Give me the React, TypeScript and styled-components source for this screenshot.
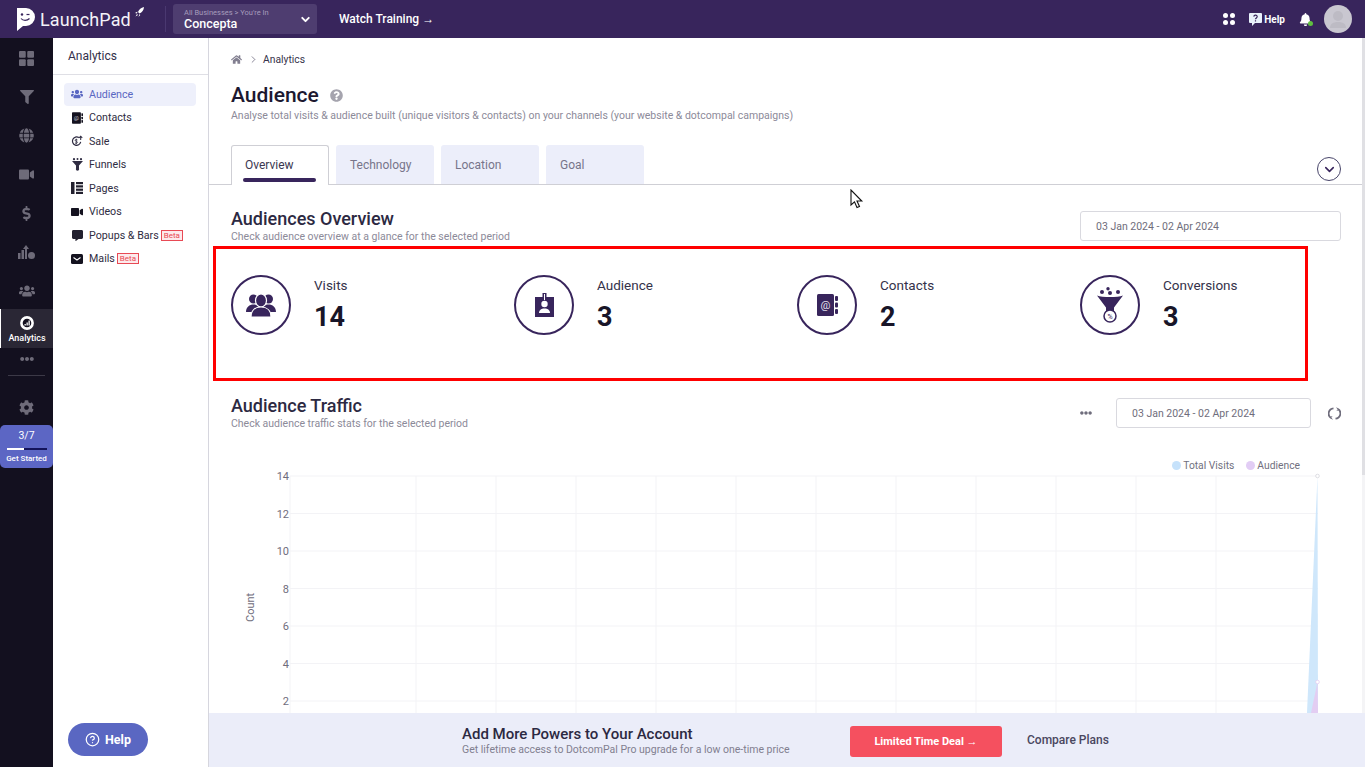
import React from 'react';
import styled, { createGlobalStyle } from 'styled-components';
import {
  FaBell,
  FaCog,
  FaCommentAlt,
  FaDollarSign,
  FaEllipsisH,
  FaFilter,
  FaGlobe,
  FaHome,
  FaQuestionCircle,
  FaUsers,
  FaVideo,
} from 'react-icons/fa';
import { FiChevronDown, FiChevronRight, FiHelpCircle } from 'react-icons/fi';

const GlobalStyle = createGlobalStyle`
  html, body {
    margin: 0;
    padding: 0;
    background: #fff;
    font-family: Roboto, "Liberation Sans", sans-serif;
    color: #2a2540;
  }
  * { box-sizing: border-box; }
`;

const Page = styled.div`
  position: relative;
  width: 1365px;
  height: 767px;
  overflow: hidden;
  display: flex;
  flex-direction: column;
`;

const TopBar = styled.header`
  height: 38px;
  flex: none;
  display: flex;
  align-items: center;
  background: #38255c;
  color: #fff;
  padding: 0 13px 0 17px;
`;

const Logo = styled.div`
  width: 148px;
  display: flex;
  align-items: center;
  gap: 4px;
  font-size: 18px;
  letter-spacing: 0.1px;
  color: #f4f2f8;
`;

const RocketSvg = styled.svg`
  margin-top: -14px;
`;

const Divider = styled.div`
  width: 1px;
  height: 26px;
  background: #4a3870;
`;

const Switcher = styled.div`
  width: 144px;
  height: 30px;
  margin-left: 7px;
  padding: 0 5px 0 11px;
  display: flex;
  justify-content: space-between;
  align-items: center;
  background: #4e3d70;
  border-radius: 3px;
`;

const SwitcherSmall = styled.div`
  font-size: 7.5px;
  line-height: 9px;
  color: #a69cbc;
  white-space: nowrap;
`;

const SwitcherName = styled.div`
  font-size: 12.5px;
  line-height: 13px;
  font-weight: 500;
`;

const Watch = styled.div`
  margin-left: 22px;
  font-size: 12px;
  font-weight: 500;
`;

const TopRight = styled.div`
  margin-left: auto;
  display: flex;
  align-items: center;
`;

const AppsButton = styled.div`
  display: flex;
  margin-right: 14px;
`;

const HelpLabel = styled.span`
  font-size: 10px;
  font-weight: 700;
  margin: 0 14px 0 2px;
`;

const BellWrap = styled.div`
  position: relative;
  display: flex;
  margin-right: 12px;
`;

const BellDot = styled.span`
  position: absolute;
  right: -1px;
  bottom: 0;
  width: 5px;
  height: 5px;
  border-radius: 50%;
  background: #5fbf3f;
`;

const Avatar = styled.div`
  width: 28px;
  height: 28px;
  border-radius: 50%;
  background: #c9c7d0;
  display: flex;
  align-items: center;
  justify-content: center;
`;

const Body = styled.div`
  flex: 1;
  min-height: 0;
  display: flex;
`;

const Rail = styled.nav`
  width: 53px;
  flex: none;
  background: #13101f;
  display: flex;
  flex-direction: column;
  align-items: stretch;
  color: #6e6b79;
`;

const RailIcon = styled.div<{ $h: number }>`
  height: ${(p) => p.$h}px;
  display: flex;
  align-items: center;
  justify-content: center;
`;

const RailGear = styled(RailIcon)`
  padding-top: 13px;
`;

const RailActive = styled.div`
  height: 39px;
  background: #2a2735;
  border-left: 1px solid #fff;
  display: flex;
  flex-direction: column;
  align-items: center;
  justify-content: center;
  gap: 3px;
  padding-top: 1px;
  color: #fff;
  font-size: 9px;
  font-weight: 500;
`;

const RailRule = styled.div`
  height: 1px;
  margin: 5px 8px 0;
  background: #3c3947;
`;

const StartCard = styled.div`
  height: 43px;
  background: #5c66c4;
  border-radius: 5px;
  color: #fff;
  display: flex;
  flex-direction: column;
  align-items: center;
  padding-top: 4px;
`;

const StartCount = styled.div`
  font-size: 10.5px;
  line-height: 13px;
`;

const StartTrack = styled.div`
  width: 40px;
  height: 2px;
  margin-top: 6px;
  background: #14145a;
`;

const StartFill = styled.div`
  height: 100%;
  background: #fff;
`;

const StartLabel = styled.div`
  font-size: 8px;
  line-height: 11px;
  margin-top: 3px;
  font-weight: 500;
  white-space: nowrap;
`;

const SubNav = styled.aside`
  width: 156px;
  flex: none;
  display: flex;
  flex-direction: column;
  border-right: 1px solid #d6d6de;
`;

const SubNavTitle = styled.div`
  height: 37px;
  padding: 10px 0 0 15px;
  font-size: 12px;
  line-height: 16px;
  color: #33304a;
  border-bottom: 1px solid #dfdfe5;
`;

const SubNavList = styled.div`
  padding: 7.5px 12px 0 11px;
  flex: 1;
  display: flex;
  flex-direction: column;
`;

const SubItem = styled.div<{ $active?: boolean }>`
  height: 23.5px;
  display: flex;
  align-items: center;
  padding-left: 7px;
  gap: 6px;
  border-radius: 4px;
  font-size: 10.7px;
  color: ${(p) => (p.$active ? '#5a67c2' : '#2f2c42')};
  background: ${(p) => (p.$active ? '#eef0fb' : 'transparent')};
`;

const SubIcon = styled.span`
  width: 12px;
  height: 14px;
  flex: none;
  display: flex;
  align-items: center;
  justify-content: center;
`;

const Beta = styled.span`
  font-size: 8px;
  line-height: 9px;
  padding: 0 2px;
  margin-left: -4px;
  color: #e84a55;
  background: #fdeaec;
  border: 1px solid #e84a55;
`;

const HelpButton = styled.div`
  width: 80px;
  height: 33px;
  margin: 0 0 11px 15px;
  display: flex;
  align-items: center;
  justify-content: center;
  gap: 5px;
  border-radius: 17px;
  background: #5a67c2;
  color: #fff;
  font-size: 12.5px;
  font-weight: 700;
`;

const Main = styled.main`
  flex: 1;
  min-width: 0;
  display: flex;
  flex-direction: column;
`;

const ScrollArea = styled.div`
  flex: 1;
  min-height: 0;
  display: flex;
  overflow: hidden;
`;

const Content = styled.div`
  flex: 1;
  min-width: 0;
`;

const ScrollTrack = styled.div`
  width: 3px;
  flex: none;
  background: #f4f4f6;
`;

const ScrollThumb = styled.div`
  height: 437px;
  background: #e0e0e4;
`;

const Header = styled.div`
  padding: 14px 0 0 22px;
`;

const Crumbs = styled.div`
  height: 14px;
  display: flex;
  align-items: center;
  gap: 6px;
  color: #827f90;
  font-size: 10.3px;
`;

const CrumbText = styled.span`
  color: #35324a;
  margin-left: -2px;
`;

const TitleRow = styled.div`
  margin-top: 15px;
  height: 28px;
  display: flex;
  align-items: center;
  gap: 11px;
`;

const Title = styled.h1`
  margin: 0;
  font-size: 21px;
  line-height: 28px;
  font-weight: 500;
  color: #1c1830;
`;

const Sub = styled.div`
  font-size: 10.5px;
  line-height: 14px;
  color: #8c8a99;
`;

const TabRow = styled.div`
  position: relative;
  margin-top: 22px;
  height: 40px;
  padding-left: 22px;
  display: flex;
  gap: 7px;
  border-bottom: 1px solid #cfcfd5;
`;

const Tab = styled.div<{ $active?: boolean }>`
  position: relative;
  width: 98px;
  height: ${(p) => (p.$active ? '40px' : '39px')};
  padding: ${(p) => (p.$active ? '12px 0 0 13px' : '13px 0 0 14px')};
  font-size: 12px;
  line-height: 14px;
  border-radius: 3px 3px 0 0;
  color: ${(p) => (p.$active ? '#3a3750' : '#77758a')};
  background: ${(p) => (p.$active ? '#fff' : '#eceefa')};
  border: ${(p) => (p.$active ? '1px solid #cfcfd5' : 'none')};
  border-bottom: none;
`;

const TabMark = styled.div`
  position: absolute;
  left: 11px;
  right: 12px;
  bottom: 3px;
  height: 4px;
  border-radius: 2px;
  background: #38255c;
`;

const Collapse = styled.div`
  margin: 12px 21px 0 auto;
  width: 24px;
  height: 24px;
  border-radius: 50%;
  border: 1.5px solid #48456a;
  display: flex;
  align-items: center;
  justify-content: center;
  color: #38255c;
`;

const Section = styled.section<{ $top: number }>`
  padding: ${(p) => p.$top}px 21px 0 22px;
`;

const SectionHead = styled.div`
  display: flex;
  align-items: flex-start;
  justify-content: space-between;
`;

const SectionTitle = styled.h2`
  margin: 0;
  font-size: 18px;
  line-height: 22px;
  font-weight: 500;
  color: #2c2942;
`;

const DateBox = styled.div<{ $w: number }>`
  width: ${(p) => p.$w}px;
  height: 30px;
  margin-top: 3px;
  padding-left: 15px;
  display: flex;
  align-items: center;
  font-size: 10.5px;
  color: #6f6d7c;
  border: 1px solid #d9d9df;
  border-radius: 3px;
`;

const Stats = styled.div`
  margin-top: 31px;
  display: grid;
  grid-template-columns: repeat(4, 283px);
`;

const Stat = styled.div`
  display: flex;
  gap: 23px;
`;

const StatCircle = styled.div`
  width: 60px;
  height: 60px;
  flex: none;
  border-radius: 50%;
  border: 2px solid #38255c;
  display: flex;
  align-items: center;
  justify-content: center;
  color: #38255c;
`;

const StatLabel = styled.div`
  margin-top: 1px;
  font-size: 13.5px;
  line-height: 18px;
  color: #35324a;
`;

const StatValue = styled.div`
  margin-top: 7px;
  font-size: 27px;
  line-height: 32px;
  font-weight: 700;
  color: #181528;
`;

const TrafficTools = styled.div`
  display: flex;
  align-items: center;
  color: #6f6d7c;
`;

const MoreDots = styled(FaEllipsisH)`
  margin: 3px 24px 0 0;
`;

const RefreshSvg = styled.svg`
  margin: 3px 0 0 17px;
`;

const ChartWrap = styled.div`
  margin-top: 26px;
`;

const Legend = styled.div`
  display: flex;
  justify-content: flex-end;
  align-items: center;
  gap: 12px;
  padding-right: 41px;
  height: 16px;
  font-size: 10.3px;
  color: #71707e;
`;

const LegendItem = styled.span`
  display: flex;
  align-items: center;
  gap: 2px;
`;

const Dot = styled.i<{ $c: string }>`
  width: 9px;
  height: 9px;
  border-radius: 50%;
  background: ${(p) => p.$c};
`;

const ChartSvg = styled.svg`
  display: block;
  margin: -6px 0 0 -22px;
`;

const Promo = styled.div`
  height: 54px;
  flex: none;
  display: flex;
  align-items: center;
  padding-left: 253px;
  background: #ebedf9;
`;

const PromoText = styled.div`
  width: 388px;
  padding-top: 2px;
`;

const PromoTitle = styled.div`
  font-size: 15px;
  line-height: 17px;
  font-weight: 500;
  color: #2c2942;
`;

const PromoSub = styled.div`
  font-size: 10.5px;
  line-height: 13px;
  color: #827f90;
`;

const DealButton = styled.div`
  width: 152px;
  height: 31px;
  margin-top: 2px;
  display: flex;
  align-items: center;
  justify-content: center;
  border-radius: 3px;
  background: #f5505f;
  color: #fff;
  font-size: 11px;
  font-weight: 700;
`;

const Compare = styled.div`
  margin-left: 25px;
  font-size: 12px;
  font-weight: 500;
  color: #4a4760;
`;

const Highlight = styled.div`
  position: absolute;
  left: 213px;
  top: 246px;
  width: 1095px;
  height: 135px;
  border: 3px solid #f00;
  pointer-events: none;
`;

const Cursor = styled.svg`
  position: absolute;
  left: 850px;
  top: 189px;
`;

const LogoMark = () => (
  <svg width="19" height="24" viewBox="0 0 19 24">
    <path d="M0 1h9a9 9 0 0 1 0 18H6l-6 5z" fill="#fff" />
    <circle cx="5" cy="7.500" r="1.200" fill="#38255c" />
    <path d="M9.500 7.500h3" stroke="#38255c" strokeWidth="1.200" />
    <path d="M4 11.500c2 2.500 6 2.500 8.500 0" stroke="#38255c" strokeWidth="1.200" fill="none" />
  </svg>
);

const Rocket = () => (
  <RocketSvg width="9" height="10" viewBox="0 0 9 10">
    <path d="M9 0C6 .5 4 2.500 3 5l1.500 1.500C7 5.500 8.800 3 9 0zM2.500 4.500 0 6l2 .5zM4.500 7 3.500 10l1.800-2zM2 7 .5 9.500 3 8z" fill="#fff" />
  </RocketSvg>
);

const GridIcon = ({ size, gap, color }: { size: number; gap: number; color: string }) => {
  const cell = (size - gap) / 2;
  return (
    <svg width={size} height={size}>
      {[0, 1].flatMap((row) =>
        [0, 1].map((col) => (
          <rect
            key={`${row}${col}`}
            x={col * (cell + gap)}
            y={row * (cell + gap)}
            width={cell}
            height={cell}
            rx={size < 14 ? 2.5 : 1}
            fill={color}
          />
        )),
      )}
    </svg>
  );
};

const HelpBubble = () => (
  <svg width="13" height="13" viewBox="0 0 13 13">
    <path d="M1 0h11a1 1 0 0 1 1 1v8a1 1 0 0 1-1 1H6l-3 3v-3H1a1 1 0 0 1-1-1V1a1 1 0 0 1 1-1z" fill="#e9f2fb" />
    <path d="M4.800 3.600c.2-2 3.600-1.800 3.400.2-.1 1.200-1.600 1.200-1.700 2.500M6.500 7.200v1.200" stroke="#38255c" strokeWidth="1.200" fill="none" />
  </svg>
);

const GrowthIcon = () => (
  <svg width="17" height="16" viewBox="0 0 17 16" fill="#6e6b79">
    <rect x="0" y="9" width="2.500" height="6" />
    <rect x="3.500" y="6" width="2.500" height="9" />
    <path d="M7 15V5H5l3-4 3 4H9v10z" />
    <circle cx="13.500" cy="11.500" r="3.500" />
  </svg>
);

const AnalyticsIcon = () => (
  <svg width="14" height="14" viewBox="0 0 14 14">
    <circle cx="7" cy="7" r="5.600" fill="#13101f" stroke="#fff" strokeWidth="2.600" />
    <path d="M4.500 8h1.300v1.500H4.500zM6.500 6.500h1.300v3H6.500zM8.500 4.500h1.300v5H8.500z" fill="#fff" />
  </svg>
);

const ContactBook = ({ w, h, fill, at }: { w: number; h: number; fill: string; at: string }) => (
  <svg width={w} height={h} viewBox="0 0 21 22">
    <rect x="0" y="0" width="17" height="22" rx="1.500" fill={fill} />
    <rect x="18" y="2" width="3" height="5" rx="1" fill={fill} />
    <rect x="18" y="8.500" width="3" height="5" rx="1" fill={fill} />
    <rect x="18" y="15" width="3" height="5" rx="1" fill={fill} />
    <text x="8.500" y="14.500" textAnchor="middle" fontSize="11" fill={at} fontFamily="Roboto, sans-serif">
      @
    </text>
  </svg>
);

const VisitsIcon = () => (
  <svg width="30" height="24" viewBox="0 0 30 24" fill="#38255c">
    <circle cx="7.500" cy="6" r="4.500" />
    <circle cx="22.500" cy="6" r="4.500" />
    <path d="M0 19c0-5 3.500-7.500 7.500-7.500S15 14 15 19zM15 19c0-5 3.500-7.500 7.500-7.500S30 14 30 19z" />
    <ellipse cx="15" cy="7.500" rx="5.500" ry="6.500" stroke="#fff" strokeWidth="1.200" />
    <path d="M5 24c0-6.500 4-10 10-10s10 3.500 10 10z" stroke="#fff" strokeWidth="1.200" />
  </svg>
);

const BadgeIcon = () => (
  <svg width="19" height="24" viewBox="0 0 19 24" fill="#38255c">
    <path d="M0 4h7.500V0h4v4H19v20H0z" />
    <circle cx="9.500" cy="11" r="3.200" fill="#fff" />
    <path d="M4 20c0-3 2.500-4 4-4.500h3c1.500.5 4 1.500 4 4.500z" fill="#fff" />
    <rect x="9" y="1" width="1" height="6" fill="#fff" />
  </svg>
);

const FunnelIcon = () => (
  <svg width="26" height="36" viewBox="0 0 26 36" fill="#38255c">
    <circle cx="11" cy="1.800" r="1.700" />
    <circle cx="5" cy="5" r="2" />
    <circle cx="13" cy="6" r="2" />
    <circle cx="21" cy="5" r="2" />
    <path d="M0 8.500c5 2 21 2 26 0l-9 12V24H9v-3.500z" />
    <circle cx="13" cy="29" r="6" fill="#fff" stroke="#38255c" strokeWidth="1.500" />
    <text x="13" y="31.500" textAnchor="middle" fontSize="7" fill="#38255c" fontFamily="Roboto, sans-serif">
      %
    </text>
  </svg>
);

const SaleIcon = () => (
  <svg width="13" height="13" viewBox="0 0 13 13" fill="none" stroke="#2f2c42">
    <path d="M8.500 2.300A4.500 4.500 0 1 0 10.500 7" strokeWidth="1.300" />
    <path d="M10.500 5V1M8.800 2.600l1.700-1.800 1.700 1.800" strokeWidth="1.100" />
    <path d="M7 4.800c-1-.8-2.500-.5-2.500.5S7 6.200 7 7.300 5.300 8.700 4.300 8M5.700 3.500v6" strokeWidth=".9" />
  </svg>
);

const SmallFunnel = () => (
  <svg width="11" height="13" viewBox="0 0 11 13" fill="#2f2c42">
    <circle cx="2" cy="1.200" r="1.100" />
    <circle cx="5.500" cy="1" r="1" />
    <circle cx="9" cy="1.200" r="1.100" />
    <path d="M0 3h11L7 7.500V10H4V7.500z" />
    <circle cx="5.500" cy="11" r="1.700" />
  </svg>
);

const PagesIcon = () => (
  <svg width="12" height="12" viewBox="0 0 12 12" fill="#22202e">
    <rect x="0" y="0" width="3.500" height="12" />
    <rect x="5" y="0" width="7" height="2.200" />
    <rect x="5" y="3.300" width="7" height="2.200" />
    <rect x="5" y="6.600" width="7" height="2.200" />
    <rect x="5" y="9.800" width="7" height="2.200" />
  </svg>
);

const MailIcon = () => (
  <svg width="12" height="10" viewBox="0 0 12 10">
    <rect width="12" height="10" rx="1.500" fill="#14121f" />
    <path d="M2.500 3.500 6 6l3.500-2.500" stroke="#fff" strokeWidth="1.100" fill="none" />
  </svg>
);

const AvatarIcon = () => (
  <svg width="16" height="18" viewBox="0 0 16 18" fill="#bdbbc4">
    <circle cx="8" cy="6" r="5" />
    <path d="M0 18c0-4 3-6 8-6s8 2 8 6z" />
  </svg>
);

const RefreshIcon = () => (
  <RefreshSvg width="13" height="13" viewBox="0 0 13 13" fill="none" stroke="#6f6d7c" strokeWidth="1.800">
    <path d="M5.500 1.300A5.300 5.300 0 0 0 3 11" />
    <path d="M7.500 11.700A5.300 5.300 0 0 0 10 2" />
    <path d="M8.500 .8 10.500 2 9 3.800M4.500 12.200 2.500 11 4 9.200" strokeWidth="1" />
  </RefreshSvg>
);

const subItems = [
  { label: 'Audience', icon: <FaUsers size={12} color="#5a67c2" />, active: true },
  { label: 'Contacts', icon: <ContactBook w={11} h={12} fill="#14121f" at="#c5c4d0" /> },
  { label: 'Sale', icon: <SaleIcon /> },
  { label: 'Funnels', icon: <SmallFunnel /> },
  { label: 'Pages', icon: <PagesIcon /> },
  { label: 'Videos', icon: <FaVideo size={12} color="#14121f" /> },
  { label: 'Popups & Bars', icon: <FaCommentAlt size={11} color="#22202e" />, beta: true },
  { label: 'Mails', icon: <MailIcon />, beta: true },
];

const stats = [
  { label: 'Visits', value: '14', icon: <VisitsIcon /> },
  { label: 'Audience', value: '3', icon: <BadgeIcon /> },
  { label: 'Contacts', value: '2', icon: <ContactBook w={21} h={22} fill="#38255c" at="#e4e1ee" /> },
  { label: 'Conversions', value: '3', icon: <FunnelIcon /> },
];

const yTicks = [14, 12, 10, 8, 6, 4, 2];
const chartTop = 9;
const yFor = (v: number) => chartTop + ((14 - v) * 225) / 12;
const xLines = [290, 416, 496, 576, 656, 736, 816, 896, 976, 1056, 1136, 1216];

const TrafficChart = () => (
  <ChartSvg width="1153" height="246" viewBox="209 0 1153 246">
    {yTicks.map((t) => (
      <g key={t}>
        <line x1="290" x2="1318" y1={yFor(t)} y2={yFor(t)} stroke="#f3f3f6" />
        <text x="289" y={yFor(t) + 4} textAnchor="end" fontSize="11" fill="#6f6d7c" fontFamily="Roboto, sans-serif">
          {t}
        </text>
      </g>
    ))}
    {xLines.map((x) => (
      <line key={x} x1={x} x2={x} y1={chartTop} y2="246" stroke="#f3f3f6" />
    ))}
    <text transform="translate(254 155) rotate(-90)" fontSize="11" fill="#6f6d7c" fontFamily="Roboto, sans-serif">
      Count
    </text>
    <path d="M1307 246 L1317.500 9 L1318 246 Z" fill="#cfe7fb" />
    <path d="M1311 246 L1317.500 215 L1318 246 Z" fill="#e3cdf2" />
    <circle cx="1317.500" cy="9" r="1.800" fill="#fff" stroke="#d5d5dc" strokeWidth=".8" />
    <circle cx="1317.500" cy="215" r="1.800" fill="#fff" stroke="#e3cdf2" strokeWidth=".8" />
  </ChartSvg>
);

const App: React.FC = () => (
  <Page>
    <GlobalStyle />
    <TopBar>
      <Logo>
        <LogoMark />
        <span>LaunchPad</span>
        <Rocket />
      </Logo>
      <Divider />
      <Switcher>
        <div>
          <SwitcherSmall>All Businesses &gt; You're In</SwitcherSmall>
          <SwitcherName>Concepta</SwitcherName>
        </div>
        <FiChevronDown size={13} strokeWidth={3.5} />
      </Switcher>
      <Watch>Watch Training →</Watch>
      <TopRight>
        <AppsButton>
          <GridIcon size={12} gap={2} color="#fff" />
        </AppsButton>
        <HelpBubble />
        <HelpLabel>Help</HelpLabel>
        <BellWrap>
          <FaBell size={13} />
          <BellDot />
        </BellWrap>
        <Avatar>
          <AvatarIcon />
        </Avatar>
      </TopRight>
    </TopBar>
    <Body>
      <Rail>
        <RailIcon $h={40}>
          <GridIcon size={15} gap={1.5} color="#6e6b79" />
        </RailIcon>
        <RailIcon $h={38}>
          <FaFilter size={14} />
        </RailIcon>
        <RailIcon $h={38}>
          <FaGlobe size={15} />
        </RailIcon>
        <RailIcon $h={40}>
          <FaVideo size={15} />
        </RailIcon>
        <RailIcon $h={38}>
          <FaDollarSign size={15} />
        </RailIcon>
        <RailIcon $h={40}>
          <GrowthIcon />
        </RailIcon>
        <RailIcon $h={37}>
          <FaUsers size={16} />
        </RailIcon>
        <RailActive>
          <AnalyticsIcon />
          Analytics
        </RailActive>
        <RailIcon $h={22}>
          <FaEllipsisH size={14} />
        </RailIcon>
        <RailRule />
        <RailGear $h={49}>
          <FaCog size={15} />
        </RailGear>
        <StartCard>
          <StartCount>3/7</StartCount>
          <StartTrack>
            <StartFill style={{ width: `${(3 / 7) * 100}%` }} />
          </StartTrack>
          <StartLabel>Get Started</StartLabel>
        </StartCard>
      </Rail>
      <SubNav>
        <SubNavTitle>Analytics</SubNavTitle>
        <SubNavList>
          {subItems.map((item) => (
            <SubItem key={item.label} $active={item.active}>
              <SubIcon>{item.icon}</SubIcon>
              {item.label}
              {item.beta && <Beta>Beta</Beta>}
            </SubItem>
          ))}
        </SubNavList>
        <HelpButton>
          <FiHelpCircle size={15} />
          Help
        </HelpButton>
      </SubNav>
      <Main>
        <ScrollArea>
          <Content>
            <Header>
              <Crumbs>
                <FaHome size={11} />
                <FiChevronRight size={11} />
                <CrumbText>Analytics</CrumbText>
              </Crumbs>
              <TitleRow>
                <Title>Audience</Title>
                <FaQuestionCircle size={13} color="#a5a4ae" />
              </TitleRow>
              <Sub>
                Analyse total visits &amp; audience built (unique visitors &amp; contacts) on your channels (your
                website &amp; dotcompal campaigns)
              </Sub>
            </Header>
            <TabRow>
              <Tab $active>
                Overview
                <TabMark />
              </Tab>
              <Tab>Technology</Tab>
              <Tab>Location</Tab>
              <Tab>Goal</Tab>
              <Collapse>
                <FiChevronDown size={15} strokeWidth={2.5} />
              </Collapse>
            </TabRow>
            <Section $top={23}>
              <SectionHead>
                <div>
                  <SectionTitle>Audiences Overview</SectionTitle>
                  <Sub>Check audience overview at a glance for the selected period</Sub>
                </div>
                <DateBox $w={261}>03 Jan 2024 - 02 Apr 2024</DateBox>
              </SectionHead>
              <Stats>
                {stats.map((s) => (
                  <Stat key={s.label}>
                    <StatCircle>{s.icon}</StatCircle>
                    <div>
                      <StatLabel>{s.label}</StatLabel>
                      <StatValue>{s.value}</StatValue>
                    </div>
                  </Stat>
                ))}
              </Stats>
            </Section>
            <Section $top={60}>
              <SectionHead>
                <div>
                  <SectionTitle>Audience Traffic</SectionTitle>
                  <Sub>Check audience traffic stats for the selected period</Sub>
                </div>
                <TrafficTools>
                  <MoreDots size={12} />
                  <DateBox $w={195}>03 Jan 2024 - 02 Apr 2024</DateBox>
                  <RefreshIcon />
                </TrafficTools>
              </SectionHead>
              <ChartWrap>
                <Legend>
                  <LegendItem>
                    <Dot $c="#c6e2fb" />
                    Total Visits
                  </LegendItem>
                  <LegendItem>
                    <Dot $c="#e2cdf5" />
                    Audience
                  </LegendItem>
                </Legend>
                <TrafficChart />
              </ChartWrap>
            </Section>
          </Content>
          <ScrollTrack>
            <ScrollThumb />
          </ScrollTrack>
        </ScrollArea>
        <Promo>
          <PromoText>
            <PromoTitle>Add More Powers to Your Account</PromoTitle>
            <PromoSub>Get lifetime access to DotcomPal Pro upgrade for a low one-time price</PromoSub>
          </PromoText>
          <DealButton>Limited Time Deal →</DealButton>
          <Compare>Compare Plans</Compare>
        </Promo>
      </Main>
    </Body>
    <Highlight />
    <Cursor width="14" height="20" viewBox="0 0 14 20">
      <path d="M1 1v15l3.500-3.200L7 18.500l2.500-1-2.500-5.500h4.800z" fill="#fff" stroke="#111" strokeWidth="1.100" />
    </Cursor>
  </Page>
);

export default App;
